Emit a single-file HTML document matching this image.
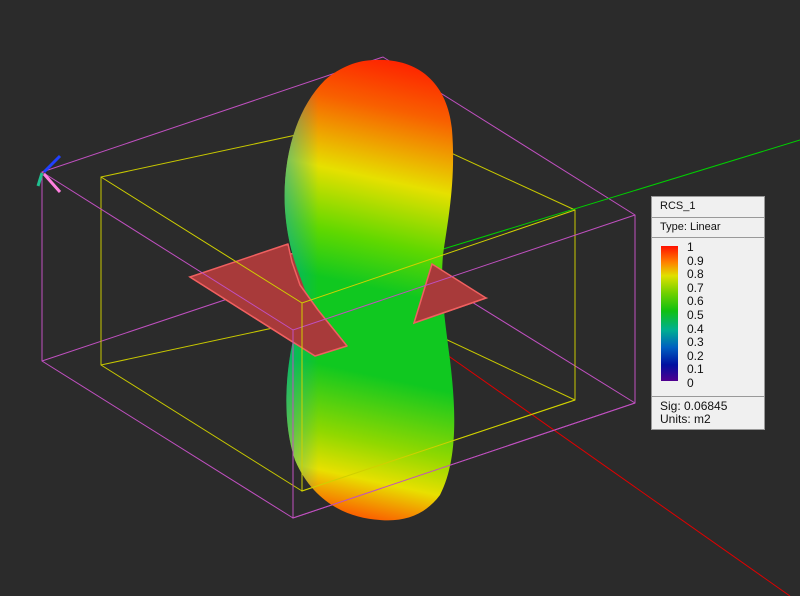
<!DOCTYPE html><html><head><style>
body{margin:0;background:#2b2b2b;width:800px;height:596px;overflow:hidden;font-family:"Liberation Sans",sans-serif}
.lg{position:absolute;left:651px;top:196px;width:112px;height:232px;background:#f0f0f0;border:1px solid #999;font-size:11px;color:#111}
.lg div{position:absolute;left:8px}
</style></head><body>
<svg width="800" height="596" style="position:absolute;left:0;top:0">
<defs>
<linearGradient id="g" gradientUnits="userSpaceOnUse" x1="430" y1="60" x2="330" y2="520">
<stop offset="0" stop-color="#ff1a00"/><stop offset="0.12" stop-color="#f86000"/>
<stop offset="0.27" stop-color="#e6e000"/><stop offset="0.4" stop-color="#60d800"/>
<stop offset="0.5" stop-color="#10c820"/><stop offset="0.68" stop-color="#10c820"/>
<stop offset="0.82" stop-color="#90d800"/><stop offset="0.9" stop-color="#e8e000"/>
<stop offset="1" stop-color="#ff4000"/></linearGradient>
<linearGradient id="s" x1="0" y1="0" x2="1" y2="0">
<stop offset="0" stop-color="#00a0c0" stop-opacity="0.5"/><stop offset="0.2" stop-color="#00a0c0" stop-opacity="0"/><stop offset="1" stop-color="#000" stop-opacity="0"/></linearGradient>
</defs>
<g stroke="#c050c0" fill="none" stroke-width="1">
<path d="M42,172 L383,57 L635,215 L635,403 L293,518 L42,361 Z M42,361 L383,247 L635,403"/>
</g>
<g stroke="#c8c800" fill="none" stroke-width="1">
<path d="M101,177 L375,118 L575,210 L575,400 L302,491 L101,365 Z M101,365 L375,306 L575,400"/>
</g>
<line x1="440" y1="250" x2="800" y2="140" stroke="#00d000"/>
<line x1="440" y1="350" x2="790" y2="596" stroke="#e00000"/>
<path d="M190,277 L330,245 L486,298 L414,323 L347,346 L315,356 Z" fill="#a83a3a" stroke="#f06060" stroke-width="1.5"/>
<path d="M375,60 C420,58 448,85 452,130 C456,180 448,220 443,255 C440,290 445,320 450,360 C456,410 458,460 440,495 C425,515 405,522 380,520 C345,518 312,500 295,460 C283,425 285,380 292,345 C298,320 310,310 305,290 C298,270 288,250 285,210 C282,160 295,110 325,80 C340,67 358,60 375,60 Z" fill="url(#g)"/>
<path d="M375,60 C420,58 448,85 452,130 C456,180 448,220 443,255 C440,290 445,320 450,360 C456,410 458,460 440,495 C425,515 405,522 380,520 C345,518 312,500 295,460 C283,425 285,380 292,345 C298,320 310,310 305,290 C298,270 288,250 285,210 C282,160 295,110 325,80 C340,67 358,60 375,60 Z" fill="url(#s)"/>
<path d="M190,277 L288,244 L292,262 L300,285 L318,310 L347,346 L315,356 Z" fill="#a83a3a" stroke="#f06060" stroke-width="1.5" stroke-linejoin="round"/>
<path d="M414,323 L432,264 L486,298 Z" fill="#a83a3a" stroke="#f06060" stroke-width="1.5"/>
<g stroke="#c050c0" fill="none"><path d="M42,172 L293,330 L635,215 M293,330 L293,518 L635,403"/></g>
<g stroke="#d0d000" fill="none"><path d="M101,177 L302,303 L575,210 M302,303 L302,491 L575,400"/></g>
<path d="M44,172 L60,156" stroke="#2040ff" stroke-width="3"/>
<path d="M42,173 L38,186" stroke="#20c090" stroke-width="3"/>
<path d="M44,174 L60,192" stroke="#ff80e0" stroke-width="3"/>
</svg>
<div class="lg">
<div style="top:3px">RCS_1</div>
<div style="left:0;top:20px;width:112px;border-top:1px solid #999"></div>
<div style="top:24px">Type: Linear</div>
<div style="left:0;top:40px;width:112px;border-top:1px solid #999"></div>
<div style="left:9px;top:49px;width:17px;height:135px;background:linear-gradient(#ff1000,#ff8000 12%,#e0e000 22%,#70d000 35%,#10c010 48%,#00b090 62%,#0060c0 75%,#0010a0 88%,#500090)"></div>
<div style="left:35px;top:44px;line-height:13.6px;font-size:12px">1<br>0.9<br>0.8<br>0.7<br>0.6<br>0.5<br>0.4<br>0.3<br>0.2<br>0.1<br>0</div>
<div style="left:0;top:199px;width:112px;border-top:1px solid #999"></div>
<div style="top:203px;line-height:13px;font-size:12px">Sig: 0.06845<br>Units: m2</div>
</div>
</body></html>
